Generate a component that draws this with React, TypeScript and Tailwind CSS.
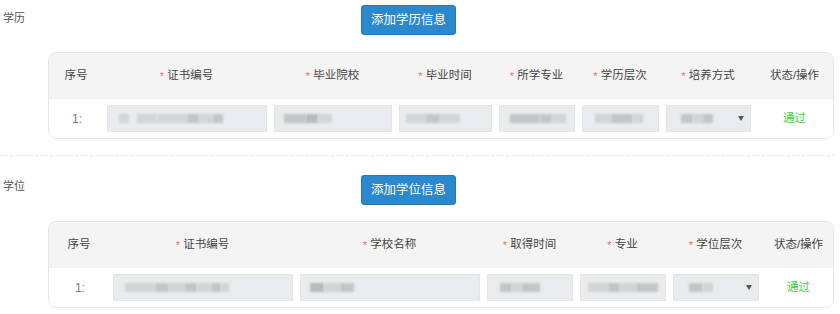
import React from "react";

type Seg = [number, number, number];
type Col = { label: string; req?: boolean; w: number; kind: "idx" | "input" | "select" | "status"; blur?: Seg[] };

const shades = ["bg-[#d3d4d6]", "bg-[#c4c5c7]", "bg-[#b9babc]"];

const edu: Col[] = [
  { label: "序号", w: 54, kind: "idx" },
  { label: "证书编号", req: true, w: 167, kind: "input", blur: [[11, 10, 0], [8, 20, 0], [0, 30, 0], [0, 12, 1], [0, 14, 0], [0, 10, 1]] },
  { label: "毕业院校", req: true, w: 125, kind: "input", blur: [[9, 22, 1], [0, 12, 2], [0, 14, 0]] },
  { label: "毕业时间", req: true, w: 100, kind: "input", blur: [[6, 20, 0], [0, 14, 1], [0, 20, 0]] },
  { label: "所学专业", req: true, w: 83, kind: "input", blur: [[10, 30, 1], [0, 12, 1], [0, 14, 0]] },
  { label: "学历层次", req: true, w: 84, kind: "input", blur: [[12, 16, 0], [0, 22, 1], [0, 10, 0]] },
  { label: "培养方式", req: true, w: 92, kind: "select", blur: [[14, 12, 1], [0, 10, 0], [0, 10, 1]] },
  { label: "状态/操作", w: 81, kind: "status" },
];

const deg: Col[] = [
  { label: "序号", w: 60, kind: "idx" },
  { label: "证书编号", req: true, w: 187, kind: "input", blur: [[11, 30, 0], [0, 14, 1], [0, 16, 0], [0, 12, 1], [0, 14, 0], [0, 10, 1], [0, 8, 0]] },
  { label: "学校名称", req: true, w: 187, kind: "input", blur: [[9, 14, 2], [0, 16, 0], [0, 14, 1]] },
  { label: "取得时间", req: true, w: 93, kind: "input", blur: [[12, 12, 1], [0, 10, 0], [0, 18, 1]] },
  { label: "专业", req: true, w: 93, kind: "input", blur: [[7, 20, 0], [0, 12, 1], [0, 16, 0], [0, 22, 1]] },
  { label: "学位层次", req: true, w: 93, kind: "select", blur: [[15, 14, 1], [0, 10, 0]] },
  { label: "状态/操作", w: 73, kind: "status" },
];

function Blur({ segs }: { segs: Seg[] }) {
  return (
    <div className="flex h-full items-center">
      {segs.map(([ml, w, s], i) => (
        <span
          key={i}
          className={`h-[9px] blur-[1px] ${shades[s]}`}
          style={{ marginLeft: ml, width: w }}
        />
      ))}
    </div>
  );
}

function Table({ cols }: { cols: Col[] }) {
  return (
    <div className="ml-[48px] w-[786px] overflow-hidden rounded-[8px] border border-[#e6e6e6]">
      <div className="flex h-[46px] items-center bg-[#f4f4f4]">
        {cols.map((c, i) => (
          <div
            key={i}
            className="flex shrink-0 items-center justify-center text-[11.5px] text-[#444]"
            style={{ width: c.w }}
          >
            {c.req && <span className="mr-[3px] text-[11px] text-[#f46a6a]">*</span>}
            {c.label}
          </div>
        ))}
      </div>
      <div className="flex h-[39px] items-center bg-white">
        {cols.map((c, i) => (
          <div key={i} className="flex shrink-0 items-center justify-center px-[3.5px]" style={{ width: c.w }}>
            {c.kind === "idx" && <span className="pl-[2px] text-[12px] text-[#777]">1:</span>}
            {(c.kind === "input" || c.kind === "select") && (
              <div className="relative h-[27px] w-full border border-[#e3e5e8] bg-[#e9ebee]">
                <Blur segs={c.blur || []} />
                {c.kind === "select" && (
                  <span className="absolute right-[6px] top-[10px] h-0 w-0 border-x-[3px] border-t-[5px] border-x-transparent border-t-[#555]" />
                )}
              </div>
            )}
            {c.kind === "status" && <span className="text-[11.5px] text-[#3bd43b]">通过</span>}
          </div>
        ))}
      </div>
    </div>
  );
}

export default function App() {
  return (
    <div
      className="w-[840px] bg-white pr-[5px]"
      style={{ fontFamily: '"Liberation Sans", "Noto Sans CJK SC", sans-serif' }}
    >
      <section className="pt-[5px]">
        <div className="flex items-start">
          <div className="ml-[3px] mt-[5px] w-[358px] text-[11px] text-[#555]">学历</div>
          <button className="h-[30px] w-[95px] rounded-[3px] border border-[#2479ba] bg-[#2b88cc] text-[12.5px] text-white">
            添加学历信息
          </button>
        </div>
        <div className="mt-[17px]">
          <Table cols={edu} />
        </div>
      </section>
      <div className="mt-[16px] border-t border-dashed border-[#e2e2e2]" />
      <section className="pt-[19px]">
        <div className="flex items-start">
          <div className="ml-[3px] mt-[3px] w-[358px] text-[11px] text-[#555]">学位</div>
          <button className="h-[30px] w-[95px] rounded-[3px] border border-[#2479ba] bg-[#2b88cc] text-[12.5px] text-white">
            添加学位信息
          </button>
        </div>
        <div className="mt-[16px]">
          <Table cols={deg} />
        </div>
      </section>
    </div>
  );
}
